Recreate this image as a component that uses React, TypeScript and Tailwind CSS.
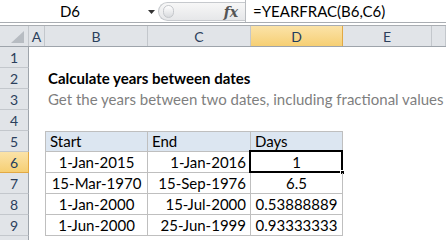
import React from "react";

const COLS = [29, 16, 103, 103, 92, 89, 14];
const ROWH = 21;

function ColHeader() {
  const labels = ["", "A", "B", "C", "D", "E", ""];
  return (
    <div className="flex h-[21px] bg-[#e1e4e8] border-b border-[#9ea4ab]">
      {labels.map((l, i) => {
        const sel = l === "D";
        return (
          <div
            key={i}
            style={{ width: COLS[i] }}
            className={`relative shrink-0 flex items-center justify-center text-[14px] border-r ${
              sel
                ? "bg-gradient-to-b from-[#fbe3a8] to-[#f6cf73] border-[#e2a944] text-[#1f3d5f]"
                : "border-[#c3c7cc] text-[#2b3f5c]"
            }`}
          >
            {i === 0 ? (
              <svg width="14" height="13" className="absolute right-[3px] bottom-[2px]">
                <polygon points="13,0 13,12 0,12" fill="#b7bcc2" />
              </svg>
            ) : (
              l
            )}
          </div>
        );
      })}
    </div>
  );
}

function Row({ n, cells, table, header, noLabel }: { n: number; cells: (string | null)[]; table?: boolean; header?: boolean; noLabel?: boolean }) {
  const sel = n === 6;
  const aligns = ["center", "right", "center"];
  return (
    <div className="flex" style={{ height: ROWH }}>
      <div
        style={{ width: COLS[0] }}
        className={`shrink-0 flex items-center justify-center text-[14px] border-r border-b ${
          sel
            ? "bg-gradient-to-b from-[#fbe3a8] to-[#f6cf73] border-[#e2a944] text-[#1f3d5f]"
            : "bg-[#e1e4e8] border-r-[#9ea4ab] border-b-[#c3c7cc] text-[#2b3f5c]"
        }`}
      >
        {noLabel ? "" : n}
      </div>
      <div style={{ width: COLS[1] }} className="shrink-0" />
      {table ? (
        cells.map((c, i) => (
          <div
            key={i}
            style={{ width: COLS[2 + i] }}
            className={`relative shrink-0 flex items-center px-[4px] text-[15px] text-black border-r border-b border-[#bfbfbf] whitespace-nowrap ${
              i === 0 ? "border-l" : ""
            } ${header ? "border-t bg-[#dce6f1] justify-start" : aligns[i] === "center" ? "justify-center" : aligns[i] === "right" ? "justify-end" : ""}`}
          >
            {c}
            {sel && i === 2 && (
              <div className="absolute -top-[2px] -left-[2px] -right-[1px] -bottom-[1px] border-2 border-black">
                <div className="absolute -right-[4px] -bottom-[4px] w-[5px] h-[5px] bg-black border border-white" />
              </div>
            )}
          </div>
        ))
      ) : (
        <div className="flex-1 flex items-center pl-[3px] whitespace-nowrap">
          {cells[0] === "title" && (
            <span className="text-[15px] font-bold text-black">Calculate years between dates</span>
          )}
          {cells[0] === "sub" && (
            <span className="text-[15px] text-[#7f7f7f]">
              Get the years between two dates, including fractional values
            </span>
          )}
        </div>
      )}
    </div>
  );
}

export default function App() {
  return (
    <div className="w-[446px] h-[240px] overflow-hidden bg-white font-['Lato',sans-serif] select-none">
      {/* formula bar */}
      <div className="flex h-[22px] bg-white">
        <div className="relative w-[158px] shrink-0 flex items-center">
          <div className="w-[140px] text-center text-[15px] text-black">D6</div>
          <svg width="7" height="4" className="absolute left-[148px] top-[10px]">
            <polygon points="0,0 7,0 3.5,4" fill="#333" />
          </svg>
        </div>
        <div className="relative w-[87px] shrink-0 mt-[2px] h-[19px] rounded-l-[10px] border border-r-0 border-[#c6c9cd] bg-gradient-to-b from-[#f7f7f7] to-[#e6e7e9] flex items-center">
          <div className="ml-[4px] w-[11px] h-[13px] rounded-full border border-[#c4c7cb] bg-gradient-to-b from-[#ffffff] to-[#d9dbde]" />
          <span className="absolute right-[7px] top-[1px] text-[14px] italic font-['DejaVu_Serif',serif] font-bold text-[#555] leading-[16px]">
            fx
          </span>
        </div>
        <div className="w-px shrink-0 bg-[#b9bcc0]" />
        <div className="flex-1 flex items-center pl-[7px] text-[15px] text-black whitespace-nowrap">=YEARFRAC(B6,C6)</div>
      </div>
      <div className="h-[4px] border-t border-b border-[#a9adb2] bg-white" />
      <ColHeader />
      <Row n={1} cells={[]} />
      <Row n={2} cells={["title"]} />
      <Row n={3} cells={["sub"]} />
      <Row n={4} cells={[]} />
      <Row n={5} cells={["Start", "End", "Days"]} table header />
      <Row n={6} cells={["1-Jan-2015", "1-Jan-2016", "1"]} table />
      <Row n={7} cells={["15-Mar-1970", "15-Sep-1976", "6.5"]} table />
      <Row n={8} cells={["1-Jan-2000", "15-Jul-2000", "0.53888889"]} table />
      <Row n={9} cells={["1-Jun-2000", "25-Jun-1999", "0.93333333"]} table />
      <Row n={10} cells={[]} noLabel />
    </div>
  );
}
